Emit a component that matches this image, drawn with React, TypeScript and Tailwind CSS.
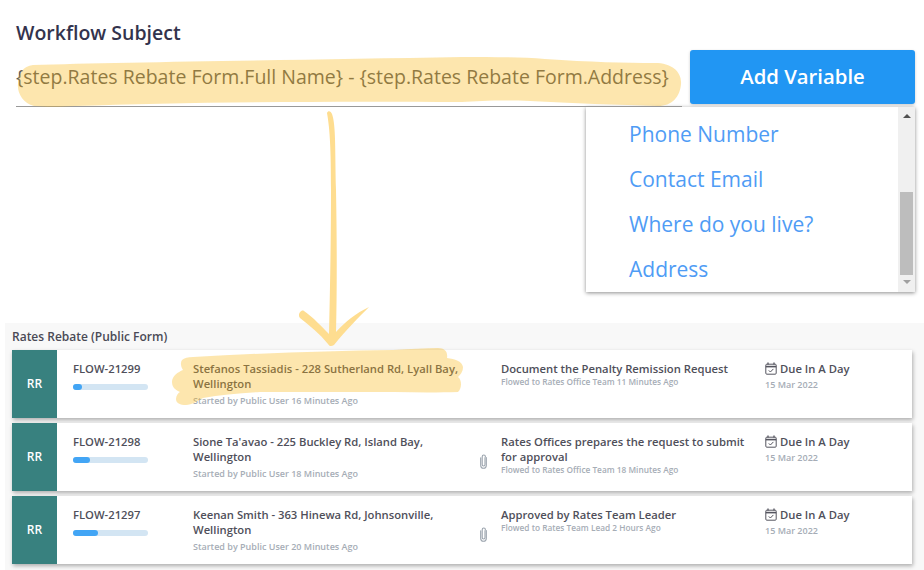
import { Fragment } from 'react';

const variables = ['Phone Number', 'Contact Email', 'Where do you live?', 'Address'];

const flows = [
  {
    id: 'FLOW-21299',
    progress: 'w-[9px]',
    title: 'Stefanos Tassiadis - 228 Sutherland Rd, Lyall Bay, Wellington',
    started: 'Started by Public User 16 Minutes Ago',
    step: 'Document the Penalty Remission Request',
    flowed: 'Flowed to Rates Office Team 11 Minutes Ago',
    attachment: false,
  },
  {
    id: 'FLOW-21298',
    progress: 'w-[17px]',
    title: "Sione Ta'avao - 225 Buckley Rd, Island Bay, Wellington",
    started: 'Started by Public User 18 Minutes Ago',
    step: 'Rates Offices prepares the request to submit for approval',
    flowed: 'Flowed to Rates Office Team 18 Minutes Ago',
    attachment: true,
  },
  {
    id: 'FLOW-21297',
    progress: 'w-[25px]',
    title: 'Keenan Smith - 363 Hinewa Rd, Johnsonville, Wellington',
    started: 'Started by Public User 20 Minutes Ago',
    step: 'Approved by Rates Team Leader',
    flowed: 'Flowed to Rates Team Lead 2 Hours Ago',
    attachment: true,
  },
];

function CalendarIcon() {
  return (
    <svg width="12" height="13" viewBox="0 0 12 13" fill="none" stroke="#55555f" className="shrink-0">
      <rect x="0.8" y="2.2" width="10.4" height="10" rx="1" strokeWidth="1" />
      <path d="M0.8 4.6H11.2" strokeWidth="1.6" />
      <path d="M3 0.6V2.6M9 0.6V2.6" strokeWidth="1.3" />
      <path d="M3.8 8.4L5.4 10L8.4 6.9" strokeWidth="1" />
    </svg>
  );
}

function PaperclipIcon() {
  return (
    <svg width="7" height="15" viewBox="0 0 7 15" fill="none" stroke="#9aa3ad" strokeWidth="1.1" strokeLinecap="round">
      <path d="M5 3.6V10.6C5 11.5 4.4 12 3.6 12C2.8 12 2.2 11.5 2.2 10.6V2.8C2.2 1.8 2.8 1 3.8 1C4.8 1 5.4 1.8 5.4 2.8" />
      <path d="M6.3 3.6V11.2C6.3 13 5.2 14.3 3.5 14.3C1.8 14.3 0.7 13 0.7 11.2V3.8" />
    </svg>
  );
}

function Scribbles() {
  return (
    <svg width="924" height="570" viewBox="0 0 924 570" className="absolute inset-0 pointer-events-none">
      <path
        fill="#f9b818"
        fillOpacity="0.35"
        d="M33 65C120 62 300 60 462 57C490 57 520 57 545 59C590 62 625 63 655 63C672 63 682 72 681 84C680 97 672 106 658 106C620 105 570 103 530 101C500 100 480 101 462 102C330 101 180 102 75 106C60 107 45 107 34 106C23 103 17 93 18 84C18 74 23 66 33 65Z"
      />
      <path
        fill="#f9b818"
        fillOpacity="0.35"
        d="M182 360C184 358 188 357 193 357C260 353 330 351 393 350C410 349 425 348 438 348C445 348 448 352 447 358C455 359 462 361 463 367C463 372 460 375 458 377C462 380 462 388 458 392C430 393 395 392 360 392C320 392 290 392 260 392C240 393 220 395 203 398C197 401 192 405 186 405C180 405 176 403 176 399C176 396 178 393 180 392C176 390 172 388 172 382C172 376 178 372 183 370C181 367 180 363 182 360Z"
      />
      <path
        fill="#fedd90"
        d="M327 113C328 110 331 111 332 114C336 125 335 150 336 190C337 240 337 290 336 332C345 322 356 313 369 307C360 316 345 331 334 345C331 347 329 346 328 344C320 334 310 326 300 318C297 315 301 309 304 311C313 317 322 327 329 334C330 290 331 240 331 190C331 150 330 130 327 113Z"
      />
    </svg>
  );
}

function FlowCard({ flow }: { flow: (typeof flows)[number] }) {
  return (
    <div className="flex h-[68px] w-[900px] bg-white shadow-[1px_2px_4px_rgba(0,0,0,0.3)]">
      <div className="flex w-[45px] shrink-0 items-center justify-center bg-[#38817f] text-[12px] font-semibold text-white">
        RR
      </div>
      <div className="w-[136px] shrink-0 pl-[16px] pt-[11px]">
        <div className="text-[11.25px] leading-[16px] font-semibold text-[#4f4f5a]">{flow.id}</div>
        <div className="mt-[7px] h-[6px] w-[75px] rounded-full bg-[#d3e5f3]">
          <div className={`h-[6px] rounded-full bg-[#42a5f5] ${flow.progress}`} />
        </div>
      </div>
      <div className="w-[284px] shrink-0 pt-[11px]">
        <div className="text-[11.25px] leading-[15px] font-semibold text-[#4f4f5a]">{flow.title}</div>
        <div className="mt-[3px] text-[9px] leading-[14px] font-semibold text-[#a6adb6]">{flow.started}</div>
      </div>
      <div className="flex w-[24px] shrink-0 items-center pl-[3px]">
        {flow.attachment && (
          <div className="mt-[9px]">
            <PaperclipIcon />
          </div>
        )}
      </div>
      <div className="w-[264px] shrink-0 pt-[11px]">
        <div className="w-[250px] text-[11.25px] leading-[15px] font-semibold text-[#4f4f5a]">{flow.step}</div>
        <div className="text-[8.3px] leading-[12px] font-semibold text-[#a6adb6]">{flow.flowed}</div>
      </div>
      <div className="pt-[11px]">
        <div className="flex items-center gap-[3px] text-[11.25px] leading-[15px] font-semibold text-[#4f4f5a]">
          <CalendarIcon />
          Due In A Day
        </div>
        <div className="mt-[2px] text-[9px] leading-[14px] font-semibold text-[#a6adb6]">15 Mar 2022</div>
      </div>
    </div>
  );
}

export default function App() {
  return (
    <div className="relative h-[570px] w-[924px] overflow-hidden bg-white font-['Open_Sans',sans-serif]">
      <div className="px-[16px] pt-[20px]">
        <h1 className="text-[19.5px] leading-[26px] font-semibold text-[#33334d]">Workflow Subject</h1>
        <div className="mt-[4px] flex items-start gap-[8px]">
          <div className="h-[57px] w-[666px] shrink-0 border-b border-[#999999] pt-[13px] text-[19.5px] leading-[27px] whitespace-nowrap text-[#5a5a5a]">
            {'{step.Rates Rebate Form.Full Name} - {step.Rates Rebate Form.Address}'}
          </div>
          <div className="w-[225px] shrink-0">
            <button
              type="button"
              className="h-[54px] w-full rounded-[3px] bg-[#2196f3] pb-[2px] text-[20.3px] font-semibold text-white shadow-[0_1px_3px_rgba(0,0,0,0.2)]"
            >
              Add Variable
            </button>
          </div>
        </div>
        <div className="ml-[570px] flex h-[185px] w-[329px] bg-white shadow-[0_1px_4px_rgba(0,0,0,0.45)]">
          <ul className="flex-1 pt-[5px] pl-[43px]">
            {variables.map((item) => (
              <li key={item} className="h-[45px] text-[21px] leading-[45px] text-[#4f9cf5]">
                {item}
              </li>
            ))}
          </ul>
          <div className="flex w-[17px] flex-col items-center bg-[#f0f0f0]">
            <div className="mt-[7px] h-0 w-0 border-x-[4px] border-b-[4px] border-x-transparent border-b-[#505050]" />
            <div className="mt-[74px] h-[83px] w-[13px] bg-[#bdbdbd]" />
            <div className="mt-[5px] h-0 w-0 border-x-[4px] border-t-[4px] border-x-transparent border-t-[#a0a0a0]" />
          </div>
        </div>
      </div>
      <div className="mt-[31px] ml-[5px] h-[247px] bg-[#f8f8f8] pl-[7px]">
        <div className="pt-[6px] text-[12px] leading-[16px] font-semibold text-[#4a4a55]">Rates Rebate (Public Form)</div>
        <div className="mt-[5px] flex flex-col gap-[5px]">
          {flows.map((flow) => (
            <Fragment key={flow.id}>
              <FlowCard flow={flow} />
            </Fragment>
          ))}
        </div>
      </div>
      <Scribbles />
    </div>
  );
}
